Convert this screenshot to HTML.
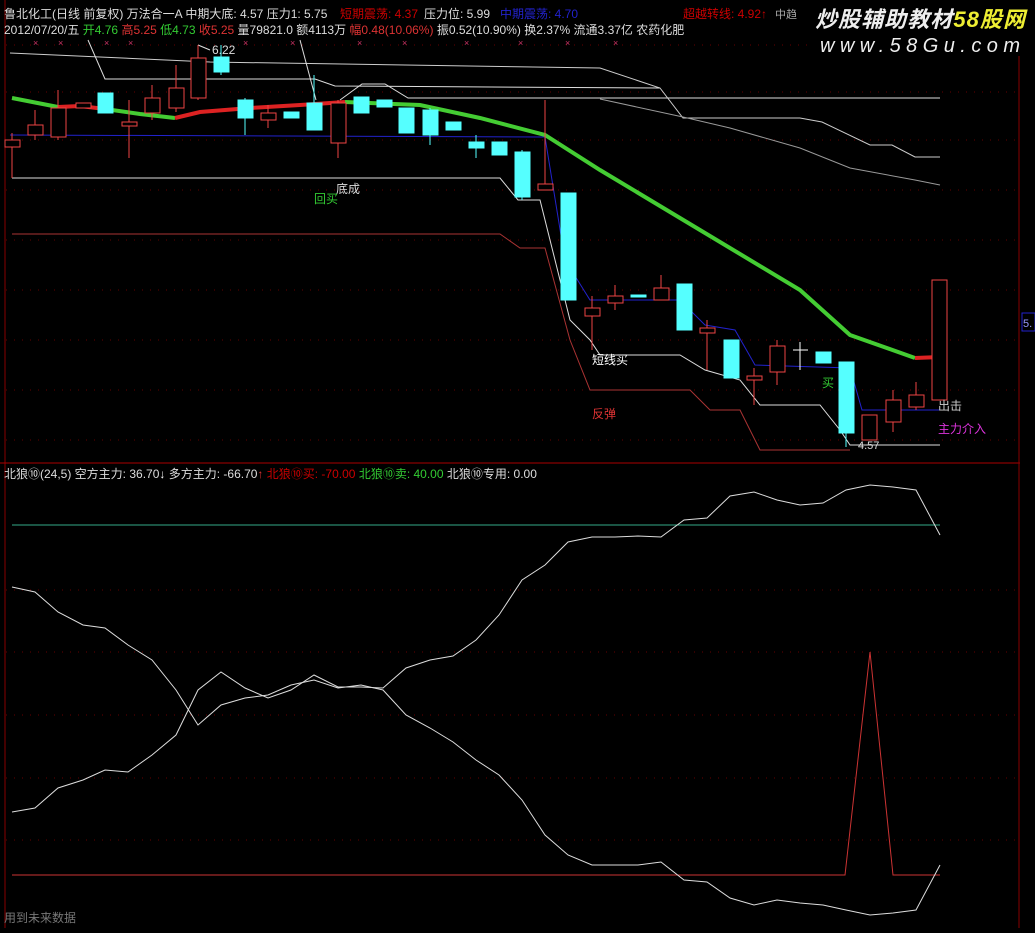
<!DOCTYPE html>
<html><head><meta charset="utf-8"><style>
html,body{margin:0;padding:0;background:#000;}
body{width:1035px;height:928px;overflow:hidden;position:relative;font-family:"Liberation Sans","Noto Sans CJK SC",sans-serif;}
svg text{font-family:"Liberation Sans","Noto Sans CJK SC",sans-serif;}
</style></head><body>
<svg width="1035" height="928" viewBox="0 0 1035 928" xmlns="http://www.w3.org/2000/svg">
<rect width="1035" height="928" fill="#000"/>
<line x1="5" y1="0" x2="5" y2="928" stroke="#800"/>
<line x1="0" y1="463" x2="1020" y2="463" stroke="#a00"/>
<line x1="1019" y1="0" x2="1019" y2="928" stroke="#800"/>
<g stroke="#600" stroke-dasharray="1,7">
<line x1="6" y1="45" x2="1019" y2="45"/><line x1="6" y1="92" x2="1019" y2="92"/><line x1="6" y1="140" x2="1019" y2="140"/><line x1="6" y1="190" x2="1019" y2="190"/><line x1="6" y1="240" x2="1019" y2="240"/><line x1="6" y1="290" x2="1019" y2="290"/><line x1="6" y1="340" x2="1019" y2="340"/><line x1="6" y1="390" x2="1019" y2="390"/><line x1="6" y1="440" x2="1019" y2="440"/>
<line x1="6" y1="590" x2="1019" y2="590"/><line x1="6" y1="652" x2="1019" y2="652"/><line x1="6" y1="715" x2="1019" y2="715"/><line x1="6" y1="778" x2="1019" y2="778"/><line x1="6" y1="840" x2="1019" y2="840"/>
</g>
<text x="4" y="18" font-size="12" fill="#ddd">鲁北化工(日线 前复权) 万法合一A 中期大底: 4.57 压力1: 5.75</text>
<text x="340" y="18" font-size="12" fill="#c00">短期震荡: 4.37</text>
<text x="424" y="18" font-size="12" fill="#ddd">压力位: 5.99</text>
<text x="500" y="18" font-size="12" fill="#22c">中期震荡: 4.70</text>
<text x="683" y="18" font-size="12" fill="#c00">超越转线: 4.92↑</text>
<text x="775" y="18" font-size="11" fill="#aaa">中趋</text>
<text x="4" y="34" font-size="12" fill="#ddd">2012/07/20/五 <tspan fill="#3c3">开4.76</tspan> <tspan fill="#d33">高5.25</tspan> <tspan fill="#3c3">低4.73</tspan> <tspan fill="#d33">收5.25</tspan> <tspan fill="#ddd">量79821.0 额4113万</tspan> <tspan fill="#d33">幅0.48(10.06%)</tspan> 振0.52(10.90%) 换2.37% 流通3.37亿 农药化肥</text>
<rect x="808" y="0" width="227" height="56" fill="#000"/>
<text x="815" y="27" font-size="22" font-style="italic" fill="#eee" font-weight="bold" textLength="210">炒股辅助教材<tspan fill="#ee3">58股网</tspan></text>
<text x="820" y="52" font-size="20" font-style="italic" fill="#eee" textLength="200">www.58Gu.com</text>
<g fill="#c36" font-size="9">
<text x="33" y="46">×</text><text x="58" y="46">×</text><text x="104" y="46">×</text><text x="128" y="46">×</text><text x="243" y="46">×</text><text x="290" y="46">×</text><text x="357" y="46">×</text><text x="402" y="46">×</text><text x="464" y="46">×</text><text x="518" y="46">×</text><text x="565" y="46">×</text><text x="613" y="46">×</text>
</g>
<polyline fill="none" stroke="#ccc" points="10,53 210,62 600,68 660,88 683,118 800,118 822,122 870,145 892,145 915,157 940,157"/>
<polyline fill="none" stroke="#999" points="600,99 683,117 730,128 800,148 850,168 915,180 940,185"/>
<polyline fill="none" stroke="#ddd" points="88,40 105,79 315,79 335,86 660,88"/>
<polyline fill="none" stroke="#ddd" points="300,40 316,100"/>
<polyline fill="none" stroke="#ddd" points="340,100 362,84 385,84 408,98 940,98"/>
<polyline fill="none" stroke="#ddd" points="12,178 500,178 518,200 540,200 570,320 590,340 600,355 680,355 705,370 740,380 760,405 820,405 840,430 850,445 940,445"/>
<polyline fill="none" stroke="#a33" points="12,234 500,234 520,248 545,248 570,340 590,390 690,390 710,410 740,410 760,450 850,450"/>
<polyline fill="none" stroke="#22c" points="10,135 545,137 565,260 590,300 680,300 705,325 735,330 755,365 850,368 862,410 940,410"/>
<polyline fill="none" stroke="#ddd" points="198,45 210,50"/>
<text x="212" y="54" font-size="12" fill="#ddd">6.22</text>
<polyline fill="none" stroke="#4c3" stroke-width="4" points="12,98 58,107"/>
<polyline fill="none" stroke="#d22" stroke-width="4" points="58,107 80,106 105,109"/>
<polyline fill="none" stroke="#4c3" stroke-width="4" points="105,109 140,114 175,118"/>
<polyline fill="none" stroke="#d22" stroke-width="4" points="175,118 200,112 250,108 300,105 345,102"/>
<polyline fill="none" stroke="#4c3" stroke-width="4" points="345,102 420,105 480,118 545,135 600,170 700,230 800,290 850,335 915,358"/>
<polyline fill="none" stroke="#d22" stroke-width="4" points="915,358 940,357"/>
<g stroke-width="1">
<g stroke="#e44" fill="#000">
<line x1="12" y1="133" x2="12" y2="178"/><rect x="5" y="140" width="15" height="7"/>
<line x1="35" y1="110" x2="35" y2="140"/><rect x="28" y="125" width="15" height="10"/>
<line x1="58" y1="90" x2="58" y2="140"/><rect x="51" y="108" width="15" height="29"/>
<rect x="76" y="103" width="15" height="5"/>
<line x1="129" y1="100" x2="129" y2="158"/><rect x="122" y="122" width="15" height="4"/>
<line x1="152" y1="85" x2="152" y2="120"/><rect x="145" y="98" width="15" height="15"/>
<line x1="176" y1="65" x2="176" y2="112"/><rect x="169" y="88" width="15" height="20"/>
<line x1="198" y1="45" x2="198" y2="100"/><rect x="191" y="58" width="15" height="40"/>
<line x1="268" y1="105" x2="268" y2="128"/><rect x="261" y="113" width="15" height="7"/>
<line x1="338" y1="100" x2="338" y2="158"/><rect x="331" y="103" width="15" height="40"/>
<line x1="545" y1="100" x2="545" y2="190"/><rect x="538" y="184" width="15" height="6"/>
<line x1="592" y1="296" x2="592" y2="350"/><rect x="585" y="308" width="15" height="8"/>
<line x1="615" y1="285" x2="615" y2="310"/><rect x="608" y="296" width="15" height="7"/>
<line x1="661" y1="275" x2="661" y2="300"/><rect x="654" y="288" width="15" height="12"/>
<line x1="707" y1="320" x2="707" y2="370"/><rect x="700" y="328" width="15" height="5"/>
<line x1="754" y1="368" x2="754" y2="405"/><rect x="747" y="376" width="15" height="4"/>
<line x1="777" y1="340" x2="777" y2="385"/><rect x="770" y="346" width="15" height="26"/>
<rect x="862" y="415" width="15" height="25"/>
<line x1="893" y1="390" x2="893" y2="432"/><rect x="886" y="400" width="15" height="22"/>
<line x1="916" y1="382" x2="916" y2="410"/><rect x="909" y="395" width="15" height="12"/>
<rect x="932" y="280" width="15" height="120"/>
</g>
<g stroke="#5ff" fill="#5ff">
<rect x="98" y="93" width="15" height="20"/>
<line x1="221" y1="45" x2="221" y2="75"/><rect x="214" y="57" width="15" height="15"/>
<line x1="245" y1="98" x2="245" y2="135"/><rect x="238" y="100" width="15" height="18"/>
<rect x="284" y="112" width="15" height="6"/>
<line x1="314" y1="75" x2="314" y2="130"/><rect x="307" y="103" width="15" height="27"/>
<rect x="354" y="97" width="15" height="16"/>
<rect x="377" y="100" width="15" height="7"/>
<rect x="399" y="108" width="15" height="25"/>
<line x1="430" y1="108" x2="430" y2="145"/><rect x="423" y="110" width="15" height="25"/>
<rect x="446" y="122" width="15" height="8"/>
<line x1="476" y1="135" x2="476" y2="158"/><rect x="469" y="142" width="15" height="6"/>
<rect x="492" y="142" width="15" height="13"/>
<line x1="522" y1="150" x2="522" y2="200"/><rect x="515" y="152" width="15" height="45"/>
<rect x="561" y="193" width="15" height="107"/>
<rect x="631" y="295" width="15" height="2"/>
<rect x="677" y="284" width="15" height="46"/>
<rect x="724" y="340" width="15" height="38"/>
<rect x="816" y="352" width="15" height="11"/>
<line x1="846" y1="362" x2="846" y2="447"/><rect x="839" y="362" width="15" height="71"/>
</g>
<g stroke="#fff"><line x1="793" y1="350" x2="808" y2="350"/><line x1="800" y1="342" x2="800" y2="370"/></g>
</g>
<text x="336" y="193" font-size="12" fill="#ddd">底成</text>
<text x="314" y="203" font-size="12" fill="#3c3">回买</text>
<text x="592" y="364" font-size="12" fill="#fff">短线买</text>
<text x="592" y="418" font-size="12" fill="#d33">反弹</text>
<text x="822" y="387" font-size="12" fill="#3c3">买</text>
<text x="938" y="410" font-size="12" fill="#ccc">出击</text>
<text x="938" y="433" font-size="12" fill="#d3d">主力介入</text>
<text x="858" y="449" font-size="11" fill="#ddd">4.57</text>
<rect x="1022" y="313" width="13" height="18" fill="#000" stroke="#22c"/>
<text x="1023" y="327" font-size="11" fill="#99f">5.</text>
<text x="4" y="478" font-size="12" fill="#ddd">北狼⑩(24,5) 空方主力: 36.70<tspan fill="#fff">↓</tspan>  多方主力: -66.70<tspan fill="#d33">↑</tspan> <tspan fill="#c00">北狼⑩买: -70.00</tspan> <tspan fill="#3c3">北狼⑩卖: 40.00</tspan> 北狼⑩专用: 0.00</text>
<line x1="12" y1="525" x2="940" y2="525" stroke="#3a8"/>
<polyline fill="none" stroke="#c33" points="12,875 845,875 870,652 893,875 940,875"/>
<polyline fill="none" stroke="#ddd" points="12,587 35,592 58,612 83,625 105,628 128,645 152,660 176,690 198,725 221,705 245,698 268,695 291,685 314,680 338,688 361,685 383,690 406,715 430,728 453,742 476,760 499,775 522,800 545,835 568,855 592,865 615,865 638,865 661,862 684,880 707,882 730,898 754,905 777,900 800,903 823,905 846,910 870,915 893,913 916,910 940,865"/>
<polyline fill="none" stroke="#ddd" points="12,812 35,808 58,788 83,780 105,770 128,772 152,755 176,735 198,690 221,672 245,688 268,698 291,690 314,675 338,687 361,687 383,688 406,668 430,660 453,656 476,640 499,615 522,580 545,565 568,542 592,537 615,537 638,536 661,537 684,520 707,518 730,496 754,492 777,500 800,505 823,503 846,490 870,485 893,487 916,490 940,535"/>
<text x="4" y="922" font-size="12" fill="#777">用到未来数据</text>
</svg>
</body></html>
